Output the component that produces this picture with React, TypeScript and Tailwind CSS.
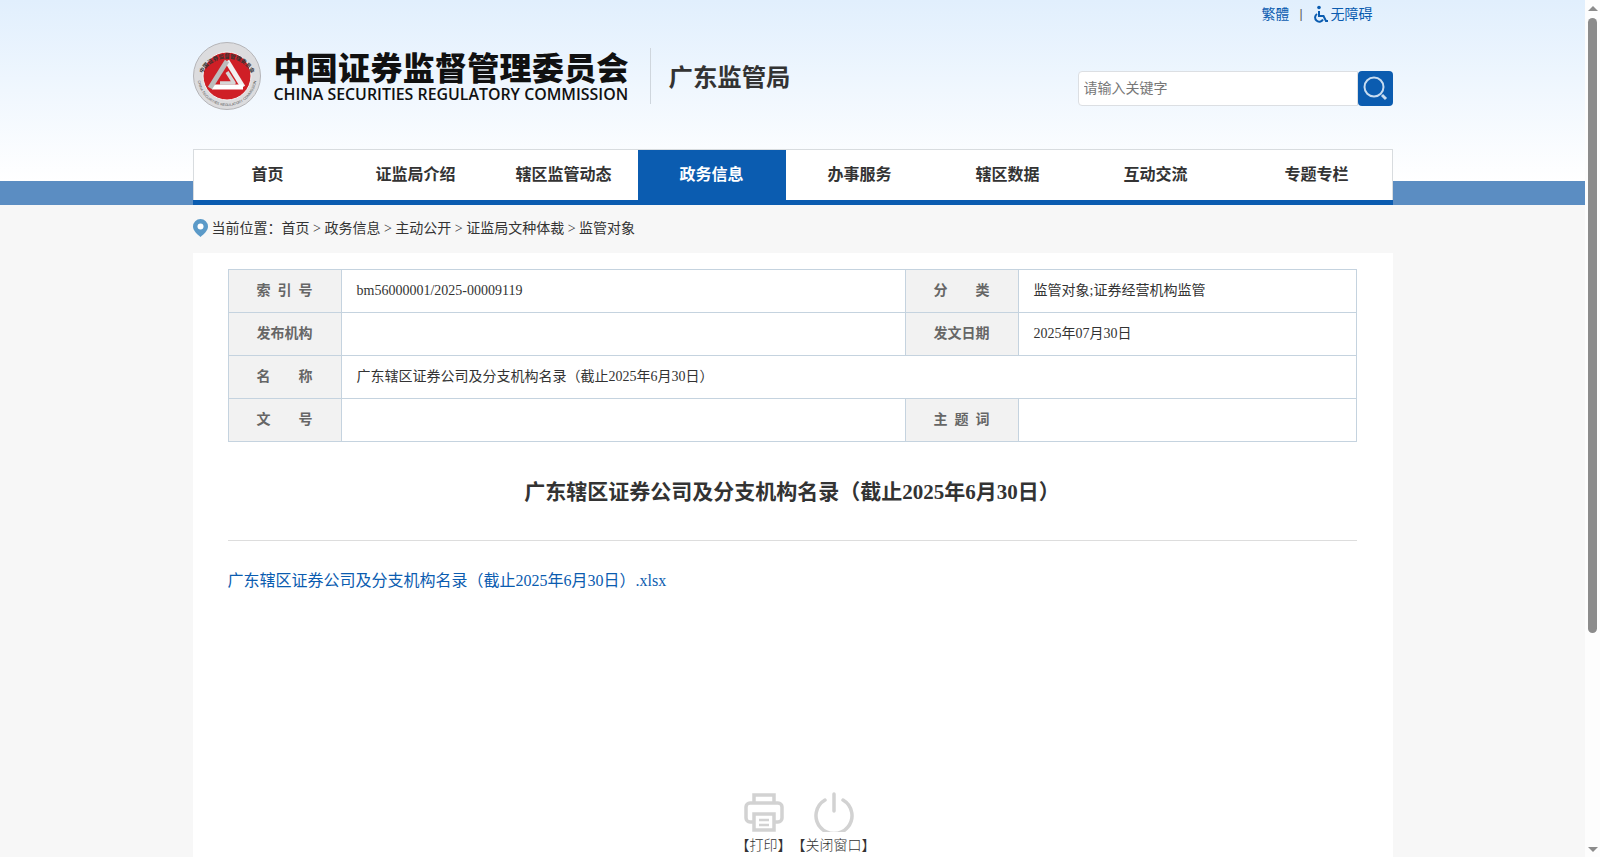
const nav = ["首页", "证监局介绍", "辖区监管动态", "政务信息", "办事服务", "辖区数据", "互动交流", "专题专栏"];

const cellHead = "w-[113px] shrink-0 bg-[#f2f2f2] border-r border-[#c5d3df] flex items-center justify-center pb-[1px] text-[14px] font-bold text-[#666]";
const cellBody = "flex items-center px-[15px] pb-[1px] text-[14px] text-[#333]";

const Emblem = () => (
  <svg width="68" height="68" viewBox="0 0 68 68">
    <defs>
      <path id="ringTop" d="M7.500 38a27 27 0 0 1 53 0" />
      <path id="ringBottom" d="M5 40a29.500 29.500 0 0 0 58 0" />
    </defs>
    <circle cx="34" cy="34" r="33.500" fill="#dcdcde" stroke="#b5b5b8" />
    <circle cx="34" cy="34" r="24" fill="#cf1f26" stroke="#f4f4f4" />
    <text fontSize="5.500" fontWeight="700" fill="#333" fontFamily="'Noto Sans CJK SC', sans-serif" textAnchor="middle">
      <textPath href="#ringTop" startOffset="50%">中国证券监督管理委员会</textPath>
    </text>
    <text fontSize="3.600" fill="#555" fontFamily="'Liberation Sans', sans-serif" textAnchor="middle">
      <textPath href="#ringBottom" startOffset="50%">CHINA SECURITIES REGULATORY COMMISSION</textPath>
    </text>
    <g fill="none" strokeWidth="5" strokeLinejoin="round">
      <path d="M34 19L50 45" stroke="#f1f1f1" />
      <path d="M50 45H19" stroke="#ffffff" />
      <path d="M17 46L34 19" stroke="#bcbcbc" />
      <path d="M34 30L41 41H27" stroke="#d6d6d6" strokeWidth="3.500" />
    </g>
  </svg>
);

const Row = ({ children }: { children: React.ReactNode }) => (
  <div className="flex h-[43px] border-b border-[#c5d3df]">{children}</div>
);

export default function App() {
  return (
    <div className="flex h-screen overflow-hidden font-['Liberation_Serif','Noto_Sans_CJK_SC',serif]">
      <div className="w-[1585px] shrink-0 bg-[#f7f7f7]">
        <header className="h-[181px] bg-gradient-to-b from-[#e1effd] to-white">
          <div className="w-[1200px] mx-auto">
            <div className="h-[28px] flex justify-end items-center pr-[20px] text-[14px] text-[#0b5cb0] font-['Liberation_Sans','Noto_Sans_CJK_SC',sans-serif]">
              <span>繁體</span>
              <span className="mx-[10px] text-[12px] text-[#555]">|</span>
              <svg width="16" height="18" viewBox="0 0 16 18" fill="none" stroke="#0b5cb0" strokeWidth="2" className="mr-[2px]">
                <circle cx="6" cy="2.500" r="1.800" fill="#0b5cb0" stroke="none" />
                <path d="M6 6v5h4.500l2.500 5h2" />
                <path d="M4 9a4.200 4.200 0 1 0 6 5.500" />
              </svg>
              <span>无障碍</span>
            </div>
            <div className="h-[96px] flex items-center">
              <Emblem />
              <div className="ml-[13px] w-[354px] font-['Noto_Sans_CJK_SC',sans-serif] leading-none">
                <div className="text-[32px] tracking-[0.3px] font-black text-[#111] whitespace-nowrap">中国证券监督管理委员会</div>
                <div className="mt-[5px] text-[15.900px] font-semibold text-[#111] whitespace-nowrap font-['Open_Sans',sans-serif]">CHINA SECURITIES REGULATORY COMMISSION</div>
              </div>
              <div className="ml-[22px] w-px h-[56px] bg-[#cfd6dd]" />
              <div className="ml-[18px] text-[24.400px] font-bold text-[#333] font-['Noto_Sans_CJK_SC',sans-serif]">广东监管局</div>
              <div className="ml-auto flex h-[35px] mt-[24px]">
                <input
                  placeholder="请输入关键字"
                  className="w-[280px] bg-white border border-[#dcdfe3] rounded-l-[4px] px-[5px] text-[14px] outline-none placeholder:text-[#777] font-['Liberation_Sans','Noto_Sans_CJK_SC',sans-serif]"
                />
                <button className="w-[35px] bg-[#0b5cb0] rounded-[4px] flex items-center justify-center">
                  <svg width="26" height="26" viewBox="0 0 26 26" fill="none" stroke="#c8dcf0" strokeWidth="2">
                    <circle cx="12" cy="12" r="9.500" />
                    <path d="M20 20l4 4" strokeWidth="3" />
                  </svg>
                </button>
              </div>
            </div>
          </div>
        </header>

        <div className="h-[24px] bg-[#5b8dc2]">
          <nav className="w-[1200px] mx-auto -translate-y-[32px] h-[56px] flex bg-white border border-[#d8dcdf] border-b-0 font-['Liberation_Sans','Noto_Sans_CJK_SC',sans-serif]">
            {nav.map((item, i) => (
              <div
                key={item}
                className={`h-[50px] flex items-center justify-center text-[16px] font-bold ${
                  i === 3 ? "bg-[#0b5cb0] text-white" : "text-[#333]"
                } ${i === 7 ? "flex-1 pl-[12px]" : "w-[148px]"}`}
              >
                {item}
              </div>
            ))}
          </nav>
          <div className="w-[1200px] mx-auto -translate-y-[37px] h-[5px] bg-[#0b5cb0]" />
        </div>

        <div className="w-[1200px] mx-auto">
          <div className="h-[48px] flex items-center pb-[2px] text-[14px] text-[#333]">
            <svg width="15" height="18" viewBox="0 0 15 18" className="mr-[4px] -mt-[1px]">
              <path d="M7.500 0a7.500 7.500 0 0 1 7.500 7.500c0 4-4 7.500-7.500 10.500C4 15 0 11.500 0 7.500A7.500 7.500 0 0 1 7.500 0z" fill="#5b9ac8" />
              <circle cx="7.500" cy="7.500" r="3" fill="#fff" />
            </svg>
            当前位置：首页 &gt; 政务信息 &gt; 主动公开 &gt; 证监局文种体裁 &gt; 监管对象
          </div>

          <main className="bg-white h-[604px] pl-[35px] pr-[36px] pt-[16px]">
            <div className="border border-b-0 border-[#c5d3df]">
              <Row>
                <div className={`${cellHead} tracking-[7px] pl-[7px]`}>索引号</div>
                <div className={`${cellBody} w-[564px] border-r border-[#c5d3df]`}>bm56000001/2025-00009119</div>
                <div className={`${cellHead} whitespace-pre`}>分　　类</div>
                <div className={cellBody}>监管对象;证券经营机构监管</div>
              </Row>
              <Row>
                <div className={cellHead}>发布机构</div>
                <div className={`${cellBody} w-[564px] border-r border-[#c5d3df]`} />
                <div className={cellHead}>发文日期</div>
                <div className={cellBody}>2025年07月30日</div>
              </Row>
              <Row>
                <div className={`${cellHead} whitespace-pre`}>名　　称</div>
                <div className={cellBody}>广东辖区证券公司及分支机构名录（截止2025年6月30日）</div>
              </Row>
              <Row>
                <div className={`${cellHead} whitespace-pre`}>文　　号</div>
                <div className={`${cellBody} w-[564px] border-r border-[#c5d3df]`} />
                <div className={`${cellHead} tracking-[7px] pl-[7px]`}>主题词</div>
                <div className={cellBody} />
              </Row>
            </div>

            <h1 className="mt-[34px] text-center text-[21px] font-bold text-[#333] leading-[32px]">
              广东辖区证券公司及分支机构名录（截止2025年6月30日）
            </h1>
            <div className="mt-[32px] h-px bg-[#dddddd]" />
            <a className="block mt-[28px] text-[16px] text-[#0b5cb0] leading-[24px]">
              广东辖区证券公司及分支机构名录（截止2025年6月30日）.xlsx
            </a>

            <div className="mt-[199px] ml-[27px] flex justify-center text-[14px] text-[#333] font-['Liberation_Sans','Noto_Sans_CJK_SC',sans-serif]">
              <div className="flex flex-col items-center">
                <svg width="40" height="40" viewBox="0 0 40 40" fill="none" stroke="#d2d2d2" strokeWidth="3.500">
                  <path d="M10 11V3h20v8" />
                  <path d="M9 30H6a4 4 0 0 1-4-4V15a4 4 0 0 1 4-4h28a4 4 0 0 1 4 4v11a4 4 0 0 1-4 4h-3" />
                  <path d="M10 22h20v16H10z" />
                  <path d="M15 28h10M15 33h10" strokeWidth="2.500" />
                </svg>
                <span className="mt-[3px] font-light">【打印】</span>
              </div>
              <div className="flex flex-col items-center">
                <svg width="40" height="40" viewBox="0 0 40 40" fill="none" stroke="#d2d2d2" strokeWidth="3.500" strokeLinecap="round">
                  <path d="M11 8a18 18 0 1 0 18 0" />
                  <path d="M20 2v17" />
                </svg>
                <span className="mt-[3px] font-light">【关闭窗口】</span>
              </div>
            </div>
          </main>
        </div>
      </div>

      <div className="w-[15px] shrink-0 bg-[#fdfdfd] flex flex-col items-center">
        <div className="mt-[6px] w-0 h-0 border-x-[5px] border-x-transparent border-b-[5px] border-b-[#8c8c8c]" />
        <div className="mt-[7px] w-[9px] h-[615px] rounded-full bg-[#8c8c8c]" />
        <div className="mt-auto mb-[5px] w-0 h-0 border-x-[5px] border-x-transparent border-t-[5px] border-t-[#8c8c8c]" />
      </div>
    </div>
  );
}
